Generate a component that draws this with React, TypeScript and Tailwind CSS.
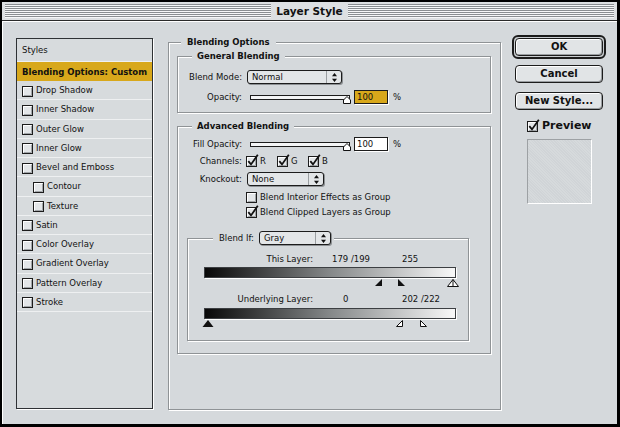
import * as React from 'react';

// Mac OS 9 "Layer Style" dialog

const effects: [string, boolean][] = [
  ['Drop Shadow', false],
  ['Inner Shadow', false],
  ['Outer Glow', false],
  ['Inner Glow', false],
  ['Bevel and Emboss', false],
  ['Contour', true],
  ['Texture', true],
  ['Satin', false],
  ['Color Overlay', false],
  ['Gradient Overlay', false],
  ['Pattern Overlay', false],
  ['Stroke', false],
];

const CheckBox = ({ checked = false }: { checked?: boolean }) => (
  <svg width="13" height="13" viewBox="0 0 13 13" className="shrink-0">
    <rect x="0.5" y="2.5" width="10" height="10" fill="#e3e6e8" stroke="#1c1c1c" />
    <path d="M1.5 11V3.5H9" stroke="#fff" fill="none" />
    <path d="M2 11.5H9.5V4" stroke="#a2a6a9" fill="none" />
    {checked && <path d="M2.3 7.2L5 10.4L11.8 0.8" stroke="#111" strokeWidth="1.8" fill="none" />}
  </svg>
);

const Arrows = () => (
  <svg width="5" height="9" viewBox="0 0 5 9">
    <path d="M2.5 0L5 3.2H0Z M0 5.8H5L2.5 9Z" fill="#111" />
  </svg>
);

const Popup = ({ label, className }: { label: string; className: string }) => (
  <div
    className={`flex h-[14px] shrink-0 items-stretch rounded-[3px] border border-[#1c1c1c] bg-[#e3e6e8] shadow-[1px_1px_0_#8d9194] ${className}`}
  >
    <span className="flex-1 pl-[4px] leading-[12px]">{label}</span>
    <span className="flex w-[15px] items-center justify-center border-l border-[#9a9ea1]">
      <Arrows />
    </span>
  </div>
);

const Slider = ({ className }: { className: string }) => (
  <div className={`relative h-[14px] w-[101px] shrink-0 ${className}`}>
    <div className="mt-[5px] h-[5px] w-[100px] border border-[#1c1c1c] bg-[#f4f5f6]" />
    <svg className="absolute left-[93px] top-[6px]" width="8" height="8" viewBox="0 0 8 8">
      <path d="M0.5 7.5V4L4 0.5L7.5 4V7.5Z" fill="#fff" stroke="#111" />
    </svg>
  </div>
);

const Field = ({ value, yellow = false }: { value: string; yellow?: boolean }) => (
  <div
    className={`ml-[3px] h-[14px] w-[34px] shrink-0 border border-[#1c1c1c] pl-[2px] leading-[12px] shadow-[1px_1px_0_#fff] ${
      yellow ? 'bg-[#d8a81b]' : 'bg-white'
    }`}
  >
    {value}
  </div>
);

const Button = ({ children, className }: { children: React.ReactNode; className: string }) => (
  <div
    className={`flex items-center justify-center rounded-[4px] border border-[#1c1c1c] bg-[#e1e4e6] text-[10px] font-bold shadow-[inset_1px_1px_0_#fff,inset_-1px_-1px_0_#9a9ea1] ${className}`}
  >
    {children}
  </div>
);

const Legend = ({ children, className }: { children: React.ReactNode; className: string }) => (
  <legend className={`flex items-center bg-[#d5d9dc] font-bold ${className}`}>{children}</legend>
);

const groupBox = 'border border-[#8f9396] shadow-[inset_1px_1px_0_#fff,1px_1px_0_#fff]';

const LayerList = () => (
  <div className="mt-[17px] h-[371px] w-[137px] shrink-0 border border-[#2e3134] bg-[#d7dbdd] shadow-[1px_1px_0_#fff]">
    <div className="flex h-[23px] items-center border-b border-[#eef0f1] pl-[5px]">Styles</div>
    <div className="flex h-[19px] items-center bg-[#d8a81b] pl-[5px] font-bold">Blending Options: Custom</div>
    {effects.map(([name, nested]) => (
      <div
        key={name}
        className={`flex h-[19.25px] items-center gap-[1px] border-b border-[#eef0f1] ${nested ? 'pl-[16px]' : 'pl-[5px]'}`}
      >
        <CheckBox />
        <span>{name}</span>
      </div>
    ))}
  </div>
);

const BlendBar = () => (
  <div className="ml-[16px] h-[11px] w-[252px] border border-[#3c3f42] bg-[linear-gradient(to_right,#080808,#858889_50%,#f8f8f8)] shadow-[1px_1px_0_#fff]" />
);

const BlendingOptions = () => (
  <fieldset className={`ml-[15px] mt-[15px] h-[374px] w-[333px] shrink-0 ${groupBox}`}>
    <Legend className="ml-[12px] h-[12px] px-[6px]">Blending Options</Legend>

    {/* General Blending */}
    <fieldset className={`ml-[8px] mt-[2px] w-[314px] pb-[8px] pt-[8px] ${groupBox}`}>
      <Legend className="ml-[14px] h-[12px] px-[5px]">General Blending</Legend>
      <div className="flex h-[14px] items-center">
        <span className="w-[64px] text-right">Blend Mode:</span>
        <Popup label="Normal" className="ml-[5px] w-[95px]" />
      </div>
      <div className="mt-[6px] flex h-[14px] items-center">
        <span className="w-[64px] text-right">Opacity:</span>
        <Slider className="ml-[8px]" />
        <Field value="100" yellow />
        <span className="ml-[5px]">%</span>
      </div>
    </fieldset>

    {/* Advanced Blending */}
    <fieldset className={`ml-[8px] mt-[7px] w-[314px] pb-[12px] pt-[5px] ${groupBox}`}>
      <Legend className="ml-[14px] h-[12px] px-[5px]">Advanced Blending</Legend>
      <div className="flex h-[14px] items-center">
        <span className="w-[64px] text-right">Fill Opacity:</span>
        <Slider className="ml-[8px]" />
        <Field value="100" />
        <span className="ml-[5px]">%</span>
      </div>
      <div className="mt-[3px] flex h-[13px] items-center">
        <span className="w-[64px] text-right">Channels:</span>
        <div className="ml-[4px] flex w-[31px] items-center gap-[1px]">
          <CheckBox checked />
          <span>R</span>
        </div>
        <div className="flex w-[31px] items-center gap-[1px]">
          <CheckBox checked />
          <span>G</span>
        </div>
        <div className="flex items-center gap-[1px]">
          <CheckBox checked />
          <span>B</span>
        </div>
      </div>
      <div className="mt-[5px] flex h-[14px] items-center">
        <span className="w-[64px] text-right">Knockout:</span>
        <Popup label="None" className="ml-[5px] w-[77px]" />
      </div>
      <div className="ml-[68px] mt-[4px] flex h-[13px] items-center gap-[1px]">
        <CheckBox />
        <span>Blend Interior Effects as Group</span>
      </div>
      <div className="ml-[68px] mt-[2px] flex h-[13px] items-center gap-[1px]">
        <CheckBox checked />
        <span>Blend Clipped Layers as Group</span>
      </div>

      {/* Blend If */}
      <fieldset className={`ml-[9px] mt-[13px] w-[282px] pb-[12px] pt-[8px] ${groupBox}`}>
        <Legend className="ml-[25px] h-[14px] pl-[6px] pr-[3px] font-normal">
          <span className="w-[40px] font-normal">Blend If:</span>
          <Popup label="Gray" className="w-[72px] font-normal" />
        </Legend>
        <div className="flex h-[12px] items-center">
          <span className="w-[125px] text-right">This Layer:</span>
          <span className="w-[89px] pl-[19px]">179 /199</span>
          <span>255</span>
        </div>
        <div className="mt-[2px]">
          <BlendBar />
        </div>
        <svg className="ml-[8px] mt-[1px] block" width="268" height="8" viewBox="0 0 268 8">
          <path d="M186 0V7H179Z" fill="#111" />
          <path d="M202 0V7H209Z" fill="#111" />
          <path d="M257 0.5L262.5 7.5H251.5Z" fill="#fff" stroke="#111" />
          <path d="M257 0.5V7.5" stroke="#111" />
        </svg>
        <div className="mt-[6px] flex h-[12px] items-center">
          <span className="w-[125px] text-right">Underlying Layer:</span>
          <span className="w-[89px] pl-[30px]">0</span>
          <span>202 /222</span>
        </div>
        <div className="mt-[3px]">
          <BlendBar />
        </div>
        <svg className="ml-[8px] mt-[1px] block" width="268" height="8" viewBox="0 0 268 8">
          <path d="M12 0L17.5 7H6.5Z" fill="#111" />
          <path d="M206.5 0.5V6.5H200.5Z" fill="#fff" stroke="#111" />
          <path d="M224.5 0.5V6.5H230.5Z" fill="#fff" stroke="#111" />
        </svg>
      </fieldset>
    </fieldset>
  </fieldset>
);

const ButtonColumn = () => (
  <div className="ml-[11px] mt-[14px] flex w-[94px] shrink-0 flex-col">
    <div className="h-[24px] rounded-[6px] border-2 border-[#1c1c1c] bg-[#c9cdd0] p-[1px]">
      <Button className="h-full w-full">OK</Button>
    </div>
    <Button className="ml-[3px] mt-[6px] h-[18px] w-[88px]">Cancel</Button>
    <Button className="ml-[3px] mt-[9px] h-[18px] w-[88px]">New Style...</Button>
    <div className="ml-[15px] mt-[9px] flex h-[13px] items-center gap-[2px]">
      <CheckBox checked />
      <span className="text-[11px] font-bold">Preview</span>
    </div>
    <div className="ml-[15px] mt-[7px] h-[65px] w-[65px] border border-b-white border-l-[#9da1a4] border-r-white border-t-[#9da1a4] bg-[#d3d7da] bg-[repeating-linear-gradient(45deg,#d0d4d7_0,#d0d4d7_1px,#d6dadc_1px,#d6dadc_2px)]" />
  </div>
);

export default function App() {
  return (
    <div className="flex h-[427px] w-[620px] flex-col border-2 border-b-[3px] border-r-[3px] border-black bg-[#d5d9dc] font-['DejaVu_Sans',sans-serif] text-[8.5px] leading-[12px] text-[#111]">
      {/* Title bar */}
      <div className="flex h-[19px] shrink-0 items-center gap-[5px] border-b border-[#2a2a2a] bg-[#dde0e2] px-[3px]">
        <div className="h-[14px] flex-1 bg-[repeating-linear-gradient(to_bottom,#8a8e91_0,#8a8e91_1px,#f6f7f8_1px,#f6f7f8_2px)]" />
        <span className="text-[10.5px] font-bold leading-[14px]">Layer Style</span>
        <div className="h-[14px] flex-1 bg-[repeating-linear-gradient(to_bottom,#8a8e91_0,#8a8e91_1px,#f6f7f8_1px,#f6f7f8_2px)]" />
      </div>

      {/* Dialog body */}
      <div className="flex flex-1 items-start pl-[14px] shadow-[inset_1px_1px_0_#fff]">
        <LayerList />
        <BlendingOptions />
        <ButtonColumn />
      </div>
    </div>
  );
}
